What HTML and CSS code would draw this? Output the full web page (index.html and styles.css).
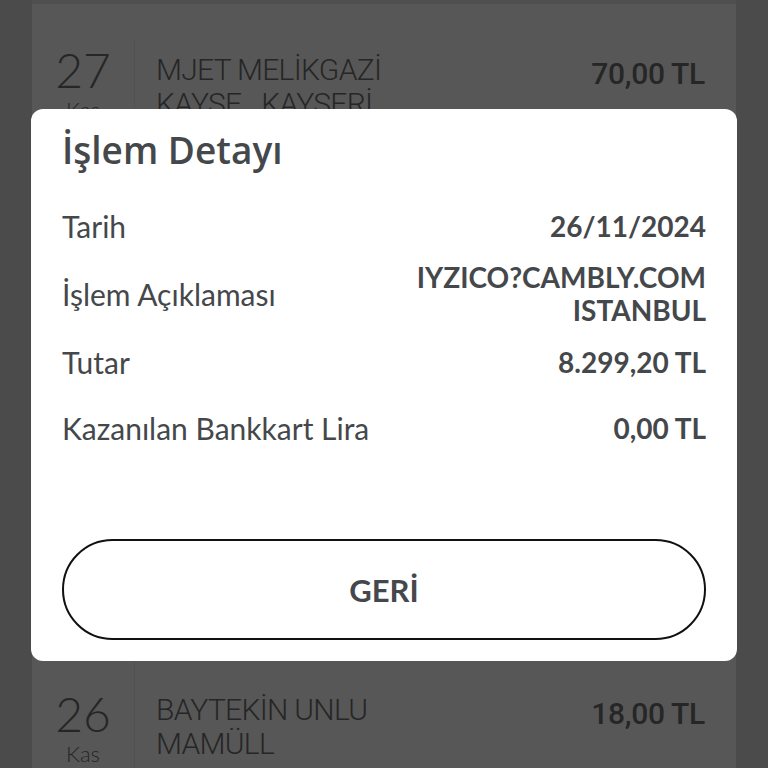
FILE: index.html
```html
<!DOCTYPE html>
<html lang="tr">
<head>
<meta charset="utf-8">
<link rel="stylesheet" href="styles.css">
</head>
<body>
<div class="column">
  <div class="tx-row first">
    <div class="tx-date">
      <span class="day">27</span>
      <span class="month">Kas</span>
    </div>
    <div class="tx-desc">MJET MELİKGAZİ<br>KAYSE&nbsp;&nbsp;&nbsp;KAYSERİ</div>
    <div class="tx-amount">70,00 TL</div>
  </div>
  <div class="tx-row second">
    <div class="tx-date">
      <span class="day">26</span>
      <span class="month">Kas</span>
    </div>
    <div class="tx-desc">BAYTEKİN UNLU<br>MAMÜLL</div>
    <div class="tx-amount">18,00 TL</div>
  </div>
</div>

<div class="overlay">
  <div class="modal">
    <h1 class="modal-title">İşlem Detayı</h1>
    <div class="details">
      <div class="detail-row">
        <span class="label">Tarih</span>
        <span class="value">26/11/2024</span>
      </div>
      <div class="detail-row">
        <span class="label">İşlem Açıklaması</span>
        <span class="value">IYZICO?CAMBLY.COM<br>ISTANBUL</span>
      </div>
      <div class="detail-row">
        <span class="label">Tutar</span>
        <span class="value">8.299,20 TL</span>
      </div>
      <div class="detail-row last">
        <span class="label">Kazanılan Bankkart Lira</span>
        <span class="value">0,00 TL</span>
      </div>
    </div>
    <button class="back-btn">GERİ</button>
  </div>
</div>
</body>
</html>
```

FILE: styles.css
```css
* { box-sizing: border-box; }

html, body {
  margin: 0;
  height: 100%;
}

body {
  background: #4b4b4b;
  font-family: "Lato", "Noto Sans", sans-serif;
  overflow: hidden;
}

.column {
  margin: 0 32px;
  height: 768px;
  background: #575757;
  border-top: 4px solid #4f4f4f;
  display: flex;
  flex-direction: column;
}

.tx-row {
  display: flex;
  align-items: flex-start;
  color: #262626;
}

.tx-row.first {
  padding-top: 34px;
  height: 686px;
}

.tx-date {
  width: 103px;
  display: flex;
  flex-direction: column;
  align-items: center;
  padding-top: 6px;
  border-right: 1px solid #525252;
  align-self: stretch;
}

.day {
  font-size: 48px;
  font-weight: 300;
  line-height: 52px;
}

.month {
  font-size: 22px;
  font-weight: 300;
  line-height: 28px;
}

.tx-desc {
  flex: 1;
  padding-left: 21px;
  padding-top: 15px;
  font-family: "Roboto", sans-serif;
  font-size: 30px;
  letter-spacing: -0.7px;
  line-height: 34px;
  font-weight: 300;
}

.second .tx-desc {
  padding-top: 11px;
}

.tx-amount {
  padding-right: 31px;
  padding-top: 18px;
  font-family: "Roboto", sans-serif;
  letter-spacing: -0.3px;
  font-size: 30px;
  font-weight: 500;
}

.second .tx-amount {
  padding-top: 14px;
}

.overlay {
  position: fixed;
  inset: 0;
  display: flex;
  align-items: center;
  justify-content: center;
  padding: 0 31px;
}

.modal {
  width: 100%;
  height: 552px;
  background: #fff;
  border-radius: 12px;
  padding: 18px 31px 21px 31px;
  color: #45484b;
  transform: translateY(1px);
  display: flex;
  flex-direction: column;
}

.modal-title {
  margin: 0;
  font-size: 37px;
  font-weight: 600;
  line-height: 46px;
  font-family: "Open Sans", sans-serif;
}

.details {
  display: flex;
  flex-direction: column;
  gap: 18px;
  margin-top: 36px;
}

.detail-row {
  display: flex;
  justify-content: space-between;
  align-items: center;
}

.detail-row.last {
  margin-top: 14px;
}

.label {
  font-size: 30px;
  line-height: 34px;
  font-weight: 400;
}

.value {
  font-size: 28px;
  line-height: 33px;
  font-weight: 700;
  text-align: right;
}

.back-btn {
  margin-top: auto;
  width: 100%;
  height: 101px;
  border: 2px solid #111;
  border-radius: 52px;
  background: #fff;
  color: #45484b;
  font-family: "Lato", sans-serif;
  font-size: 31px;
  font-weight: 700;
}
```
